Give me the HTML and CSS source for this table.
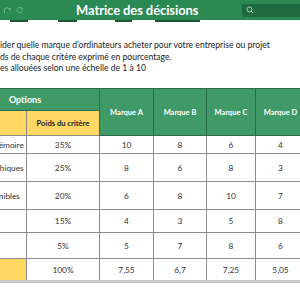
FILE: index.html
```html
<!DOCTYPE html>
<html lang="fr">
<head>
<meta charset="utf-8">
<title>Matrice des décisions</title>
<link rel="stylesheet" href="styles.css">
</head>
<body>
<header class="titlebar">
  <div class="quick">
    <svg class="qicon" viewBox="0 0 10 10" width="9" height="9"><path d="M1.5 8 V5.5 A3 3 0 0 1 7.5 4.5" fill="none" stroke="currentColor" stroke-width="1.1"/><path d="M6 2.6 L8 4.8 L8.8 2.4" fill="none" stroke="currentColor" stroke-width="1.1"/></svg>
    <svg class="qicon" viewBox="0 0 10 10" width="8" height="8"><path d="M7.8 3.2 A3.3 3.3 0 1 0 8.3 5.5" fill="none" stroke="currentColor" stroke-width="1.2"/><path d="M6.2 1.2 L8.4 3.4 L5.6 3.9" fill="none" stroke="currentColor" stroke-width="1.1"/></svg>
  </div>
  <h1 class="title">Matrice des décisions</h1>
  <div class="search">
    <svg viewBox="0 0 10 10" width="8" height="8"><circle cx="4.3" cy="4.3" r="3.1" fill="none" stroke="currentColor" stroke-width="1.1"/><path d="M6.6 6.6 L9 9" stroke="currentColor" stroke-width="1.2"/></svg>
  </div>
</header>
<div class="tabs">
  <span class="tab t1"></span>
  <span class="tab t2"></span>
  <span class="tab t3"></span>
  <span class="tab t4"></span>
</div>
<section class="intro">
  <p>ider quelle marque d’ordinateurs acheter pour votre entreprise ou projet</p>
  <p>ds de chaque critère exprimé en pourcentage.</p>
  <p>es allouées selon une échelle de 1 à 10</p>
</section>
<table class="matrix">
  <colgroup>
    <col class="c-crit"><col class="c-poids"><col class="c-a"><col class="c-b"><col class="c-c"><col class="c-d">
  </colgroup>
  <thead>
    <tr class="h1">
      <th colspan="2" class="opt">Options</th>
      <th rowspan="2" class="brand">Marque A</th>
      <th rowspan="2" class="brand">Marque B</th>
      <th rowspan="2" class="brand">Marque C</th>
      <th rowspan="2" class="brand">Marque D</th>
    </tr>
    <tr class="h2">
      <th class="yel crit">Critères</th>
      <th class="yel">Poids du critère</th>
    </tr>
  </thead>
  <tbody>
    <tr class="r1"><td class="crit">Capacité mémoire</td><td>35%</td><td>10</td><td>8</td><td>6</td><td>4</td></tr>
    <tr class="r2"><td class="crit">Cartes graphiques</td><td>25%</td><td>8</td><td>6</td><td>8</td><td>3</td></tr>
    <tr class="r3"><td class="crit">Ports disponibles</td><td>20%</td><td>6</td><td>8</td><td>10</td><td>7</td></tr>
    <tr class="r4"><td class="crit">Prix</td><td>15%</td><td>4</td><td>3</td><td>5</td><td>8</td></tr>
    <tr class="r5"><td class="crit">Design</td><td>5%</td><td>5</td><td>7</td><td>8</td><td>6</td></tr>
    <tr class="r6"><td class="crit yel">Total</td><td>100%</td><td>7,55</td><td>6,7</td><td>7,25</td><td>5,05</td></tr>
  </tbody>
</table>
</body>
</html>
```
FILE: styles.css
```css
* { box-sizing: border-box; }
html, body { margin: 0; padding: 0; }
body {
  width: 300px;
  height: 300px;
  overflow: hidden;
  background: #fff;
  font-family: Lato, "Open Sans", sans-serif;
  color: #333;
}
.titlebar {
  height: 20px;
  background: #2b8a54;
  display: flex;
  align-items: center;
  color: #fff;
}
.quick {
  width: 76px;
  display: flex;
  align-items: center;
  gap: 4px;
  padding-left: 3px;
  color: #6fb98c;
}
.title {
  margin: 0;
  font-size: 13px;
  font-weight: 700;
  letter-spacing: -0.1px;
  white-space: nowrap;
  line-height: 20px;
}
.search {
  margin-left: auto;
  width: 58px;
  height: 13px;
  background: #1f6b3f;
  border-radius: 2px 0 0 2px;
  display: flex;
  align-items: center;
  padding-left: 4px;
  color: #b9dcc5;
}
.tabs {
  height: 2px;
  display: flex;
}
.tab { height: 2px; background: #1c5a36; }
.t1 { margin-left: 10px; width: 18px; }
.t2 { margin-left: 30px; width: 19px; }
.t3 { margin-left: 38px; width: 17px; }
.t4 { margin-left: 23px; width: 45px; }
.intro {
  padding-top: 18px;
  font-size: 8.6px;
  line-height: 11.7px;
  color: #222;
}
.intro p { margin: 0; white-space: nowrap; }
.matrix {
  margin-top: 13px;
  margin-left: -50px;
  border-collapse: collapse;
  table-layout: fixed;
  width: 355px;
  font-size: 8.3px;
  border-top: 1px solid #c8c8c8;
  border-bottom: 3px solid #c8c8c8;
}
.c-crit { width: 76px; }
.c-poids { width: 73px; }
.c-a { width: 54px; }
.c-b { width: 53px; }
.c-c { width: 49px; }
.c-d { width: 50px; }
.matrix th, .matrix td {
  padding: 0;
  text-align: center;
  vertical-align: middle;
  white-space: nowrap;
  overflow: hidden;
}
.matrix th {
  font-weight: 700;
  color: #fff;
  background: #3f9a67;
  border: 1px solid #2b6d48;
}
.matrix th.opt { font-size: 9px; }
.matrix th.brand { font-size: 7.5px; }
.matrix th.yel, .matrix td.yel {
  background: #ffd863;
  color: #222;
  border: 1px solid #8a8a8a;
  font-size: 7.6px;
}
.matrix td {
  border: 1px solid #8c8c8c;
  color: #333;
}
.matrix td.crit { text-align: left; padding-left: 7px; }
.matrix th.crit { text-align: left; padding-left: 2px; }
.h1 { height: 22px; }
.h2 { height: 25px; }
.r1 { height: 18px; }
.r2 { height: 28px; }
.r3 { height: 28px; }
.r4 { height: 23px; }
.r5 { height: 26px; }
.r6 { height: 23px; }
```
